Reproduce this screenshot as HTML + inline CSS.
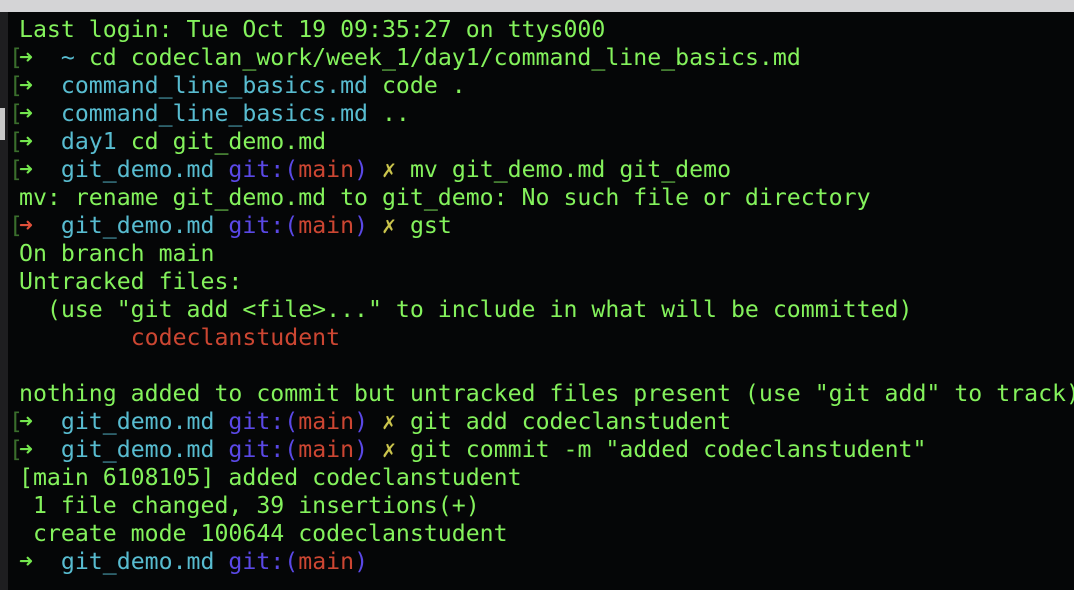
<!DOCTYPE html>
<html><head><meta charset="utf-8"><style>
html,body{margin:0;padding:0;width:1074px;height:590px;overflow:hidden;background:#040506;}
#top{position:absolute;left:0;top:0;width:1074px;height:12px;background:#d4d4d6;}
#left{position:absolute;left:0;top:12px;width:8px;height:578px;background:#1e1e20;}
#left .b{position:absolute;left:0;width:5px;background:#c8c8c8;}
#term{position:absolute;left:8px;top:12px;width:1066px;height:578px;background:#050607;}
pre{position:absolute;left:19px;top:16px;margin:0;font-family:"DejaVu Sans Mono","Liberation Mono",monospace;font-size:23.2px;line-height:28px;color:#84f25c;}
.c{color:#58bcd0}.p{color:#5a48e6}.r{color:#cc4632}.y{color:#cac44c}.a{color:#74e64e}.ar{color:#e0503a}
.br{position:absolute;left:9px;font-family:"DejaVu Sans Mono",monospace;font-size:23.2px;line-height:28px;color:#3a6e2c;}
</style></head><body>
<div id="top"></div>
<div id="left"><div class="b" style="top:96px;height:32px;"></div></div>
<div id="term"></div>
<span class="br" style="top:44px">[</span>
<span class="br" style="top:72px">[</span>
<span class="br" style="top:100px">[</span>
<span class="br" style="top:128px">[</span>
<span class="br" style="top:156px">[</span>
<span class="br" style="top:212px">[</span>
<span class="br" style="top:408px">[</span>
<span class="br" style="top:436px">[</span>
<pre>Last login: Tue Oct 19 09:35:27 on ttys000
<span class="a">➜</span>  <span class="c">~</span> cd codeclan_work/week_1/day1/command_line_basics.md
<span class="a">➜</span>  <span class="c">command_line_basics.md</span> code .
<span class="a">➜</span>  <span class="c">command_line_basics.md</span> ..
<span class="a">➜</span>  <span class="c">day1</span> cd git_demo.md
<span class="a">➜</span>  <span class="c">git_demo.md</span> <span class="p">git:(</span><span class="r">main</span><span class="p">)</span> <span class="y">✗</span> mv git_demo.md git_demo
mv: rename git_demo.md to git_demo: No such file or directory
<span class="ar">➜</span>  <span class="c">git_demo.md</span> <span class="p">git:(</span><span class="r">main</span><span class="p">)</span> <span class="y">✗</span> gst
On branch main
Untracked files:
  (use "git add &lt;file&gt;..." to include in what will be committed)
        <span class="r">codeclanstudent</span>

nothing added to commit but untracked files present (use "git add" to track)
<span class="a">➜</span>  <span class="c">git_demo.md</span> <span class="p">git:(</span><span class="r">main</span><span class="p">)</span> <span class="y">✗</span> git add codeclanstudent
<span class="a">➜</span>  <span class="c">git_demo.md</span> <span class="p">git:(</span><span class="r">main</span><span class="p">)</span> <span class="y">✗</span> git commit -m "added codeclanstudent"
[main 6108105] added codeclanstudent
 1 file changed, 39 insertions(+)
 create mode 100644 codeclanstudent
<span class="a">➜</span>  <span class="c">git_demo.md</span> <span class="p">git:(</span><span class="r">main</span><span class="p">)</span></pre>
</body></html>
